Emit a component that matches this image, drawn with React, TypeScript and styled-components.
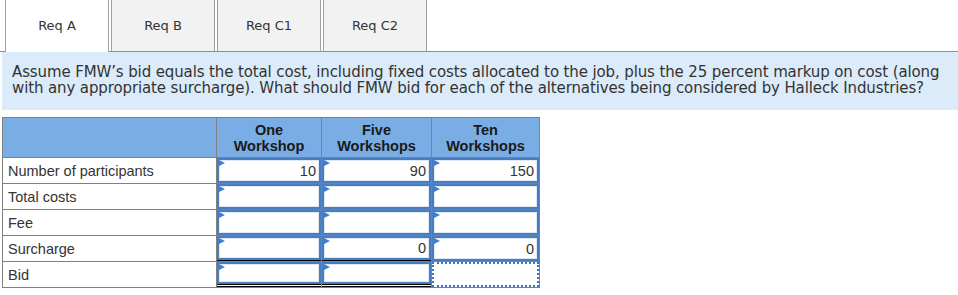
import React from 'react'
import styled, { createGlobalStyle } from 'styled-components'

const GlobalStyle = createGlobalStyle`
  body {
    margin: 0;
    background: #fff;
    font-family: "DejaVu Sans", Verdana, sans-serif;
  }
`

type Row = {
  label: string
  values: string[]
  line?: 'single' | 'double'
}

const tabs = ['Req A', 'Req B', 'Req C1', 'Req C2']
const columns = [['One', 'Workshop'], ['Five', 'Workshops'], ['Ten', 'Workshops']]

const rows: Row[] = [
  { label: 'Number of participants', values: ['10', '90', '150'] },
  { label: 'Total costs', values: ['', '', ''] },
  { label: 'Fee', values: ['', '', ''] },
  { label: 'Surcharge', values: ['', '0', '0'], line: 'single' },
  { label: 'Bid', values: ['', '', ''], line: 'double' },
]

const App = () => {
  return (
    <Page>
      <GlobalStyle />
      <TabBar>
        {tabs.map((t, i) => (
          <Tab key={t} $active={i === 0}>{t}</Tab>
        ))}
      </TabBar>

      <Prompt>
        Assume FMW’s bid equals the total cost, including fixed costs allocated to the job, plus the 25 percent markup on cost (along
        with any appropriate surcharge). What should FMW bid for each of the alternatives being considered by Halleck Industries?
      </Prompt>

      <Grid>
        <colgroup>
          <col style={{ width: 214 }} />
          <col style={{ width: 105 }} />
          <col style={{ width: 110 }} />
          <col style={{ width: 108 }} />
        </colgroup>
        <thead>
          <tr>
            <HeadCell />
            {columns.map((c) => (
              <HeadCell key={c.join(' ')}>
                {c[0]}
                <br />
                {c[1]}
              </HeadCell>
            ))}
          </tr>
        </thead>
        <tbody>
          {rows.map((r) => (
            <tr key={r.label}>
              <Label>{r.label}</Label>
              {r.values.map((v, i) => {
                const focused = r.label === 'Bid' && i === 2
                return (
                  <Cell key={i}>
                    {focused ? (
                      <FocusBox />
                    ) : (
                      <Entry $line={i === 2 ? undefined : r.line}>
                        <Field readOnly value={v} />
                      </Entry>
                    )}
                  </Cell>
                )
              })}
            </tr>
          ))}
        </tbody>
      </Grid>
    </Page>
  )
}

export default App

const Page = styled.div`
  width: 958px;
  height: 295px;
  overflow: hidden;
`

const TabBar = styled.div`
  display: flex;
  gap: 2px;
  height: 51px;
  padding-left: 5px;
  border-bottom: 1px solid #8f8f8f;
`

const Tab = styled.div<{ $active?: boolean }>`
  width: 104px;
  box-sizing: border-box;
  height: ${(p) => (p.$active ? '52px' : '51px')};
  display: flex;
  justify-content: center;
  align-items: center;
  padding-bottom: 1px;
  border: 1px solid #a0a0a0;
  border-top: none;
  border-bottom: none;
  background-color: ${(p) => (p.$active ? '#fff' : '#f2f2f2')};
  color: #333;
  font-size: 13px;
`

const Prompt = styled.div`
  margin-left: 2px;
  padding: 12px 12px 14px 10px;
  background-color: #dbebf9;
  color: #333;
  font-size: 15px;
  line-height: 16px;
  height: 32px;
  letter-spacing: -0.12px;
`

const Grid = styled.table`
  margin: 7px 0 0 2px;
  border-collapse: collapse;
  table-layout: fixed;
  width: 537px;
  font-family: "Liberation Sans", Arial, sans-serif;
  font-size: 14.5px;
  color: #333;
`

const HeadCell = styled.th`
  height: 39px;
  padding: 0;
  border: 1px solid #808080;
  background-color: #79ade3;
  color: #1a1a1a;
  font-weight: 700;
  line-height: 16px;
  text-align: center;
  vertical-align: middle;
`

const Label = styled.td`
  height: 25px;
  padding: 0 0 0 5px;
  border: 1px solid #808080;
  vertical-align: middle;
  white-space: nowrap;
`

const Cell = styled.td`
  height: 25px;
  padding: 0;
  border: 1px solid #808080;
  vertical-align: top;
`

const Entry = styled.div<{ $line?: 'single' | 'double' }>`
  position: relative;
  height: 25px;
  box-sizing: border-box;
  border-bottom: ${(p) =>
    p.$line === 'double' ? '3px double #000' : p.$line === 'single' ? '1px solid #000' : 'none'};

  &::before {
    content: '';
    position: absolute;
    left: 2px;
    top: 2px;
    border-top: 3px solid transparent;
    border-bottom: 3px solid transparent;
    border-left: 6px solid #3b7fd4;
  }
`

const Field = styled.input`
  display: block;
  width: 100%;
  height: 100%;
  box-sizing: border-box;
  margin: 0;
  padding: 0 3px 0 8px;
  border: 2px solid #4a7dbd;
  box-shadow: inset 0 0 0 1px #dfe9f5;
  background: #fff;
  outline: none;
  font-family: "Liberation Sans", Arial, sans-serif;
  font-size: 14.5px;
  color: #333;
  text-align: right;
`

const FocusBox = styled.div`
  height: 25px;
  box-sizing: border-box;
  border: 2px dotted #3d74c2;
  background: #fff;
`
